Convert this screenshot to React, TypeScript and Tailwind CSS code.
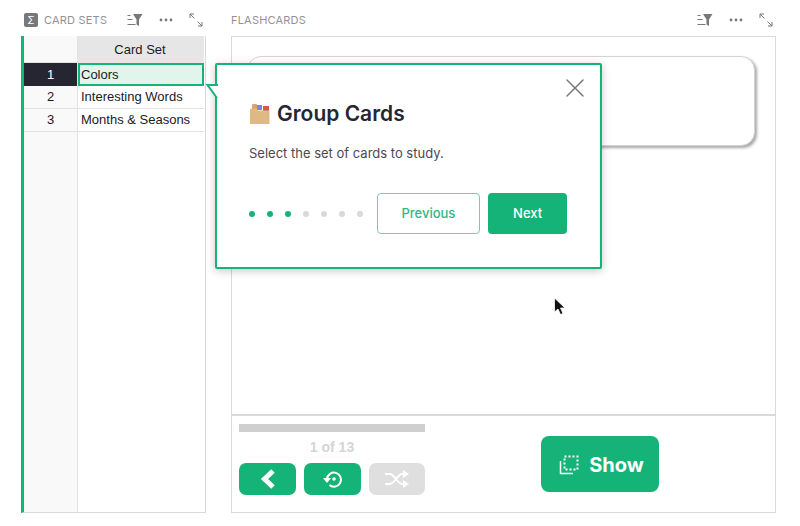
import React from 'react';
import { X } from 'lucide-react';

const FilterIcon: React.FC = () => (
  <svg width="16" height="14" viewBox="0 0 16 14" className="text-[#77777c]" fill="currentColor">
    <path d="M6 1h9.500L12 6.500V13l-2.500-1.500V6.500z" />
    <rect x="0.5" y="2" width="3" height="1" />
    <rect x="0.5" y="6" width="5" height="1" />
    <rect x="0.5" y="11" width="8" height="1" />
  </svg>
);

const DotsIcon: React.FC = () => (
  <svg width="14" height="14" viewBox="0 0 14 14" className="text-[#77777c]" fill="currentColor">
    <circle cx="2" cy="7" r="1.4" />
    <circle cx="7" cy="7" r="1.4" />
    <circle cx="12" cy="7" r="1.4" />
  </svg>
);

const ExpandIcon: React.FC = () => (
  <svg width="14" height="14" viewBox="0 0 14 14" fill="none" stroke="#77777c" strokeWidth="1">
    <path d="M1 5V1h4M1 1l4.500 4.500M13 9v4H9M13 13L8.500 8.500" />
  </svg>
);

const PanelIcons: React.FC = () => (
  <div className="flex items-center gap-[16px]">
    <FilterIcon />
    <DotsIcon />
    <ExpandIcon />
  </div>
);

const rows = ['Colors', 'Interesting Words', 'Months & Seasons'];

const BoxIcon: React.FC = () => (
  <svg width="22" height="22" viewBox="0 0 22 22">
    <rect x="3" y="1" width="5" height="6" rx="1" fill="#e0a070" />
    <rect x="8" y="2" width="5" height="5" fill="#7f86d8" />
    <rect x="14" y="3" width="6" height="5" fill="#d9584a" />
    <path d="M1 7c0-1 .5-1.500 1.500-1.500h5L9 7.500h11.500V21H1z" fill="#dfb984" />
  </svg>
);

export default function App() {
  return (
    <div className="relative w-[800px] h-[526px] bg-white overflow-hidden font-['Inter',sans-serif]">
      <div className="flex h-[36px] text-[11px] text-[#929296] tracking-[0.2px]">
        <div className="w-[231px] pl-[24px] pr-[28px] flex items-center justify-between pt-[4px]">
          <div className="flex items-center gap-[6px]">
            <span className="w-[14px] h-[14px] rounded-[2px] bg-[#77777c] text-white text-[10px] flex items-center justify-center">Σ</span>
            <span>CARD SETS</span>
          </div>
          <PanelIcons />
        </div>
        <div className="flex-1 pr-[27px] flex items-center justify-between pt-[4px]">
          <span>FLASHCARDS</span>
          <PanelIcons />
        </div>
      </div>

      <div className="flex h-[477px]">
        <div className="ml-[21px] w-[185px] border-l-[3px] border-l-[#16b378] border-r border-b border-[#d9d9d9] flex font-['Liberation_Sans',sans-serif] text-[13px] text-[#1a1a1f]">
          <div className="w-[54px] bg-[#f9f9f9] border-r border-[#e2e2e2]">
            <div className="h-[27px] border-b border-[#e2e2e2]" />
            <div className="h-[23px] bg-[#262633] text-white flex items-center justify-center">1</div>
            {['2', '3'].map((n) => (
              <div key={n} className="h-[23px] border-b border-[#e2e2e2] flex items-center justify-center">{n}</div>
            ))}
          </div>
          <div className="w-[126px]">
            <div className="h-[27px] pt-[1px] pr-[2px] bg-[#e6e6e6] flex items-center justify-center">Card Set</div>
            {rows.map((r, i) => (
              <div
                key={r}
                className={i === 0
                  ? 'h-[23px] bg-[#e0f5ec] border-2 border-[#16b378] pl-[1px] flex items-center'
                  : 'h-[23px] bg-white border-b border-[#e2e2e2] pl-[3px] flex items-center'}
              >
                {r}
              </div>
            ))}
          </div>
        </div>

        <div className="ml-[25px] w-[545px] border border-[#d9d9d9] flex flex-col">
          <div className="h-[379px] border-b-2 border-[#d9d9d9] pt-[19px] pl-[15px] pr-[20px]">
            <div className="h-[90px] rounded-[14px] bg-white border border-[#d4d4d4] shadow-[2px_2px_3px_#a8a8a8]" />
          </div>
          <div className="flex-1 flex pl-[7px]">
            <div className="w-[186px] pt-[8px]">
              <div className="h-[8px] bg-[#cfcfcf]" />
              <div className="mt-[7px] text-center text-[14px] leading-[17px] font-bold text-[#d4d4d4] font-['Liberation_Sans',sans-serif]">1 of 13</div>
              <div className="mt-[7px] flex justify-between">
                <button className="w-[57px] h-[32px] rounded-[7px] bg-[#16b378] flex items-center justify-center">
                  <svg width="18" height="22" viewBox="0 0 18 22" fill="none" stroke="#fff" strokeWidth="5" strokeLinejoin="miter">
                    <path d="M14 3l-8.500 8 8.500 8" />
                  </svg>
                </button>
                <button className="w-[57px] h-[32px] rounded-[7px] bg-[#16b378] flex items-center justify-center">
                  <svg width="22" height="22" viewBox="0 0 22 22" fill="none" stroke="#fff" strokeWidth="2">
                    <path d="M5 11a7 7 0 1 1 2.500 6" />
                    <path d="M1 10h8l-4 5z" fill="#fff" stroke="none" />
                    <circle cx="12" cy="11" r="1.800" fill="#fff" stroke="none" />
                  </svg>
                </button>
                <button className="w-[56px] h-[32px] rounded-[7px] bg-[#dfdfdf] flex items-center justify-center">
                  <svg width="26" height="20" viewBox="0 0 26 20" fill="none" stroke="#fff" strokeWidth="2">
                    <path d="M1 5h5c4 0 8 10 12 10h2M1 15h5c4 0 8-10 12-10h2" />
                    <path d="M19 1l6 4-6 4zM19 11l6 4-6 4z" fill="#fff" stroke="none" />
                  </svg>
                </button>
              </div>
            </div>
            <button className="ml-[116px] mt-[20px] w-[118px] h-[56px] pl-[3px] pt-[1px] rounded-[8px] bg-[#16b378] text-white flex items-center justify-center gap-[10px] text-[20px] font-bold font-['Inter',sans-serif]">
              <svg width="20" height="20" viewBox="0 0 20 20" fill="none" stroke="#fff">
                <rect x="5.500" y="1.500" width="13" height="13" strokeWidth="2" strokeDasharray="2 2" />
                <path d="M1.500 6v12.500H14" strokeWidth="1.500" />
              </svg>
              Show
            </button>
          </div>
        </div>
      </div>

      {/* tour popover */}
      <div className="absolute left-[215px] top-[63px] w-[387px] h-[206px] bg-white border-2 border-[#16b378] rounded-[2px] shadow-[0_2px_8px_rgba(0,0,0,0.22)] pl-[32px] pr-[33px] pt-[35px]">
        <svg className="absolute left-[-12px] top-[19px]" width="14" height="20" viewBox="0 0 14 20">
          <path d="M12 1.500H2L12 14z" fill="#fff" />
          <path d="M13 1H2.500L12 14" fill="none" stroke="#16b378" strokeWidth="2" />
        </svg>
        <X className="absolute right-[9px] top-[7px] text-[#77777c]" size={32} strokeWidth={1.1} />
        <div className="flex items-center gap-[6px] text-[21px] leading-[28px] font-semibold text-[#262633]">
          <BoxIcon />
          <span>Group Cards</span>
        </div>
        <div className="mt-[15px] text-[13px] leading-[20px] text-[#494950]">Select the set of cards to study.</div>
        <div className="mt-[30px] flex items-center">
          <div className="flex gap-[12px] w-[128px]">
            {[0, 1, 2, 3, 4, 5, 6].map((d) => (
              <span key={d} className={d < 3 ? 'w-[6px] h-[6px] rounded-full bg-[#16b378]' : 'w-[6px] h-[6px] rounded-full bg-[#d9d9d9]'} />
            ))}
          </div>
          <button className="w-[104px] h-[41px] rounded-[4px] border-[1.5px] border-[#6fcfae] text-[#2bb985] text-[13px] font-medium">Previous</button>
          <button className="ml-[8px] w-[79px] h-[41px] rounded-[4px] bg-[#16b378] text-white text-[13px] font-medium">Next</button>
        </div>
      </div>

      {/* mouse cursor */}
      <svg className="absolute left-[553px] top-[297px]" width="13" height="19" viewBox="0 0 13 19">
        <path d="M1.500 1v14l3.500-3 2.500 5.500 2.500-1L7.500 11h4.500z" fill="#111" stroke="#fff" strokeWidth="0.800" />
      </svg>
    </div>
  );
}
